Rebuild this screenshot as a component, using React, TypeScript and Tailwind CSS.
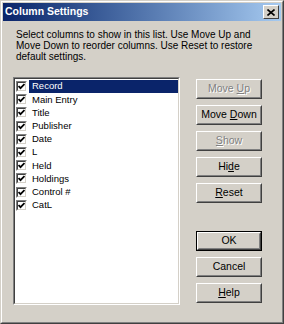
const items = [
  "Record",
  "Main Entry",
  "Title",
  "Publisher",
  "Date",
  "L",
  "Held",
  "Holdings",
  "Control #",
  "CatL",
];

function CheckBox() {
  return (
    <div className="h-[11px] w-[11px] shrink-0 border border-t-[#808080] border-l-[#808080] border-b-white border-r-white">
      <div className="flex h-full w-full items-center justify-center border border-t-[#404040] border-l-[#404040] border-b-[#d4d0c8] border-r-[#d4d0c8] bg-white">
        <svg width="7" height="7" viewBox="0 0 7 7">
          <path d="M0.5 3 L2.5 5.2 L6.5 1" fill="none" stroke="#000" strokeWidth="1.8" />
        </svg>
      </div>
    </div>
  );
}

function Btn({
  children,
  disabled,
  primary,
}: {
  children: React.ReactNode;
  disabled?: boolean;
  primary?: boolean;
}) {
  return (
    <div className={"h-[20px] w-[66px] " + (primary ? "border border-black" : "")}>
      <div className="h-full w-full border border-t-white border-l-white border-b-[#404040] border-r-[#404040]">
        <div
          className={
            "flex h-full w-full items-center justify-center border border-t-[#d4d0c8] border-l-[#d4d0c8] border-b-[#808080] border-r-[#808080] text-[10.5px] " +
            (disabled ? "text-[#808080] [text-shadow:1px_1px_0_#fff]" : "text-black")
          }
        >
          <span>{children}</span>
        </div>
      </div>
    </div>
  );
}

export default function App() {
  return (
    <div
      className="flex h-[324px] w-[284px] flex-col border border-t-[#d4d0c8] border-l-[#d4d0c8] border-b-[#404040] border-r-[#404040] bg-[#d4d0c8]"
      style={{ fontFamily: '"Liberation Sans", Arial, sans-serif' }}
    >
      <div className="flex h-full flex-col border border-t-white border-l-white border-b-[#808080] border-r-[#808080] p-px">
        <div className="flex h-[18px] shrink-0 items-center justify-between bg-gradient-to-r from-[#0a246a] to-[#a6caf0] pl-[2px] pr-[2px]">
          <span className="text-[10.5px] font-bold text-white">Column Settings</span>
          <div className="flex h-[14px] w-[16px] items-center justify-center border border-t-white border-l-white border-b-[#404040] border-r-[#404040] bg-[#d4d0c8]">
            <svg width="8" height="7" viewBox="0 0 8 7">
              <path d="M0.5 0.5 L7.5 6.5 M7.5 0.5 L0.5 6.5" stroke="#000" strokeWidth="1.6" />
            </svg>
          </div>
        </div>

        <div className="flex flex-1 flex-col pl-[10px] pt-[8px]">
          <p className="pl-[3px] text-[10px] leading-[11px] text-black">
            Select columns to show in this list. Use Move Up and
            <br />
            Move Down to reorder columns. Use Reset to restore
            <br />
            default settings.
          </p>

          <div className="mt-[15px] flex gap-[16px]">
            <div className="h-[228px] w-[167px] border border-t-[#808080] border-l-[#808080] border-b-white border-r-white">
              <div className="h-full w-full border border-t-[#404040] border-l-[#404040] border-b-[#d4d0c8] border-r-[#d4d0c8] bg-white pt-px">
                {items.map((item, i) => (
                  <div key={item} className="flex h-[13.2px] items-center pl-px">
                    <CheckBox />
                    <div
                      className={
                        "ml-[2px] flex h-full flex-1 items-center pl-[3px] text-[9.5px] " +
                        (i === 0 ? "bg-[#0a246a] text-white" : "text-black")
                      }
                    >
                      {item}
                    </div>
                  </div>
                ))}
              </div>
            </div>

            <div className="mt-[2px] flex flex-col">
              <div className="flex flex-col gap-[6px]">
                <Btn disabled>
                  Move <u>U</u>p
                </Btn>
                <Btn>
                  Move <u>D</u>own
                </Btn>
                <Btn disabled>
                  <u>S</u>how
                </Btn>
                <Btn>
                  Hi<u>d</u>e
                </Btn>
                <Btn>
                  <u>R</u>eset
                </Btn>
              </div>
              <div className="mt-[28px] flex flex-col gap-[6px]">
                <Btn primary>OK</Btn>
                <Btn>Cancel</Btn>
                <Btn>
                  <u>H</u>elp
                </Btn>
              </div>
            </div>
          </div>
        </div>
      </div>
    </div>
  );
}
